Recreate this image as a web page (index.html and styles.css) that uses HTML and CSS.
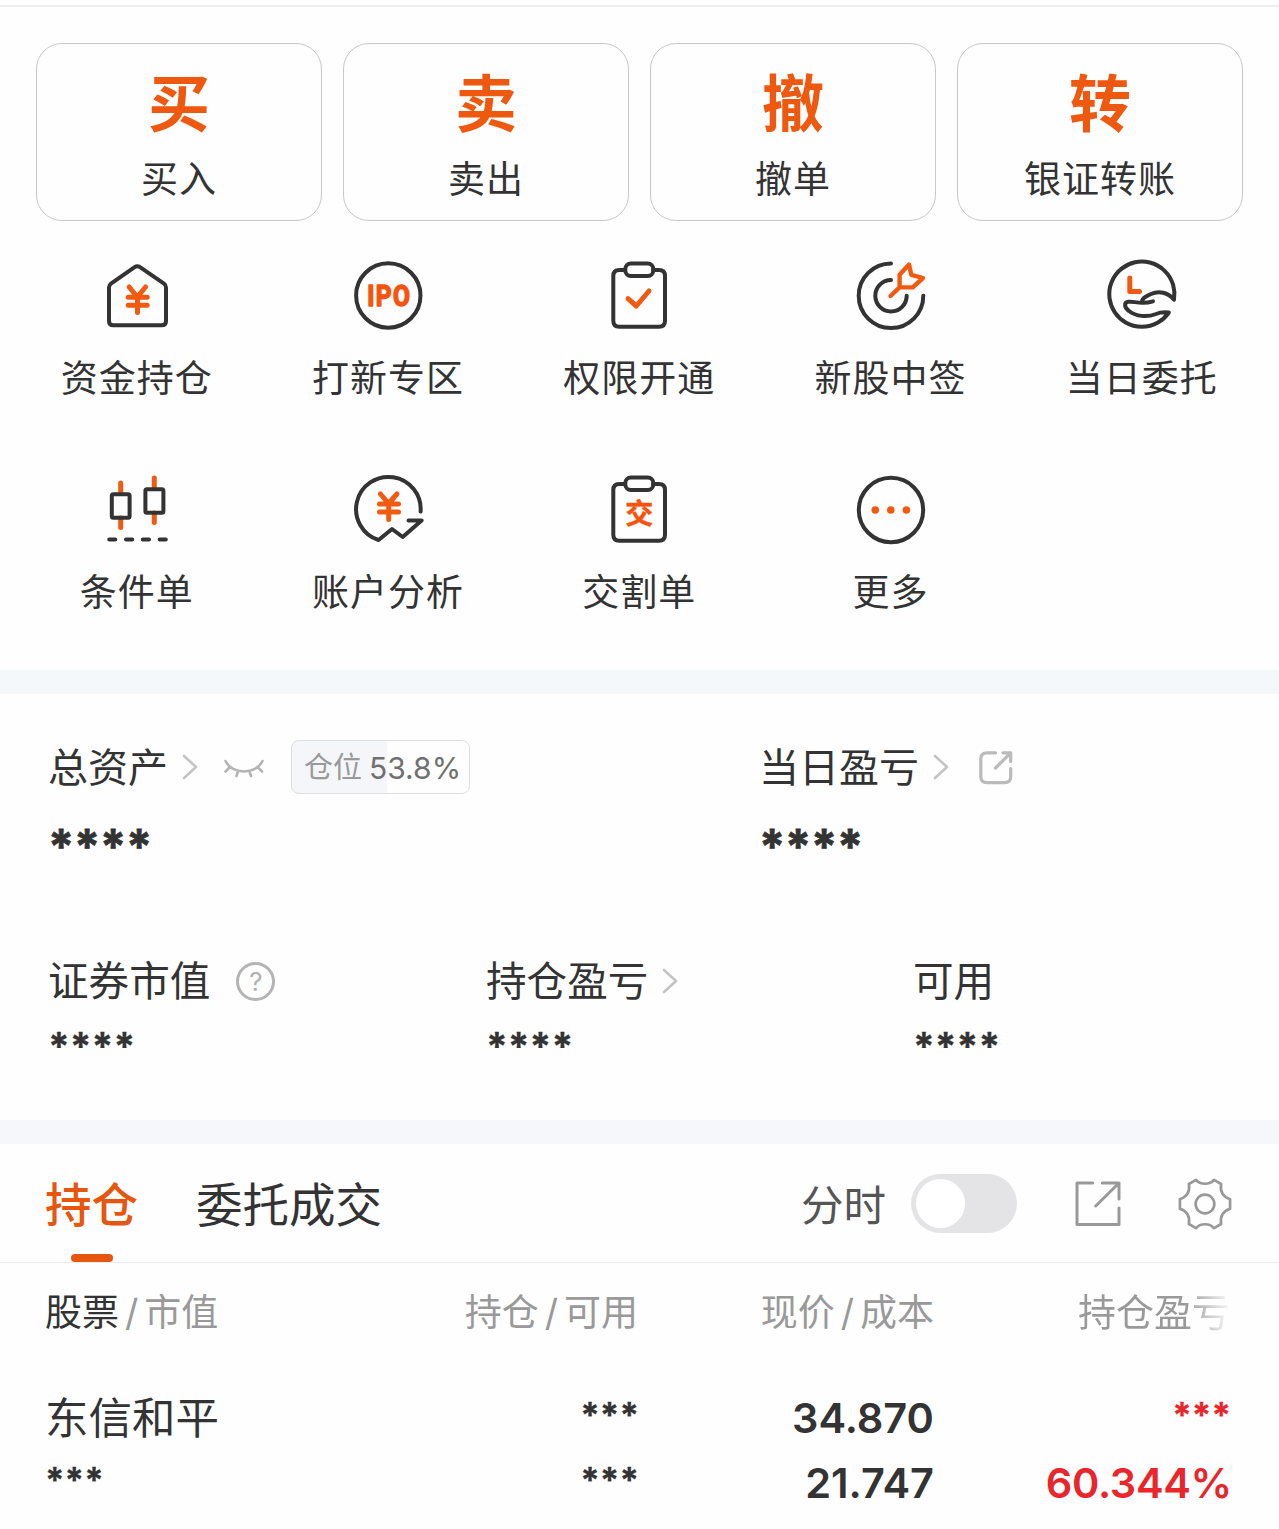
FILE: index.html
```html
<!DOCTYPE html>
<html lang="zh-CN">
<head>
  <meta charset="UTF-8" />
  <meta name="viewport" content="width=device-width, initial-scale=1.0"/>
  <title>交易</title>
  <link rel="stylesheet" href="styles.css">
</head>
<body>

  <!-- Main trade buttons -->
  <div class="trade-buttons">
    <a class="trade-card"><b>买</b><span>买入</span></a>
    <a class="trade-card"><b>卖</b><span>卖出</span></a>
    <a class="trade-card"><b>撤</b><span>撤单</span></a>
    <a class="trade-card"><b>转</b><span>银证转账</span></a>
  </div>

  <!-- Shortcuts -->
  <div class="menu">
    <a class="menu-item">
      <svg class="icon" viewBox="0 0 80 80">
        <path d="M12 32.5Q12 30 14 28.6L37.6 12.2Q40.3 10.2 43 12.2L67 28.6Q69 30 69 32.5V66Q69 70.3 64.7 70.3H16.3Q12 70.3 12 66Z"/>
        <path class="accent" d="M32.2 32L40.3 42L48.6 32M31.2 42.3H50.2M31.2 50.2H50.2M40.5 42V57.5"/>
      </svg>
      <span>资金持仓</span>
    </a>
    <a class="menu-item">
      <svg class="icon" viewBox="0 0 80 80">
        <circle cx="40.3" cy="40.5" r="32.2"/>
        <text class="icon-text ipo" transform="translate(41.3 51.2) scale(0.82 1)">IPO</text>
      </svg>
      <span>打新专区</span>
    </a>
    <a class="menu-item">
      <svg class="icon" viewBox="0 0 80 80">
        <path d="M26 15H20.3Q14.3 15 14.3 21V65.7Q14.3 71.7 20.3 71.7H60Q66 71.7 66 65.7V21Q66 15 60 15H54"/>
        <rect x="26.3" y="8.5" width="28" height="12.5" rx="5.5"/>
        <path class="accent" d="M29 43.7L37.3 51L50 36"/>
      </svg>
      <span>权限开通</span>
    </a>
    <a class="menu-item">
      <svg class="icon" viewBox="0 0 80 80">
        <path d="M40 8.4A32.3 32.3 0 1 0 72.3 40.7M40 25A15.7 15.7 0 1 0 55.7 40.7"/>
        <path class="accent thin" d="M39.5 41L48.6 32.4V19.7L58 9.5L60.3 19.8L72 23L61.7 32.4H48.6"/>
      </svg>
      <span>新股中签</span>
    </a>
    <a class="menu-item">
      <svg class="icon" viewBox="0 0 80 80">
        <path d="M40 46.3C40.5 42 45 41 49 39C57 35.2 66 37.5 72 44.6A32.6 32.6 0 1 0 66.8 57.5C61 57 58 57.2 54 59C45 62.5 34 61.5 27 56C22 52.5 22 47.5 26 46.8C30 46 34 47.8 40 47.8C44 48 47 47.5 51 46.3"/>
        <path class="accent" d="M27.8 23V36.6H37.5"/>
      </svg>
      <span>当日委托</span>
    </a>
    <a class="menu-item">
      <svg class="icon" viewBox="0 0 80 80">
        <path class="accent" d="M23.7 14V24M23.7 49V58.5M57.3 9V19M57.3 44V53.5"/>
        <rect x="14.8" y="25.3" width="17.8" height="23.4" rx="1.5"/>
        <rect x="48.4" y="20.3" width="18" height="23.4" rx="1.5"/>
        <path d="M12.2 70.6H18.3M29 70.6H35.2M45.8 70.6H52M62.6 70.6H68.8"/>
      </svg>
      <span>条件单</span>
    </a>
    <a class="menu-item">
      <svg class="icon" viewBox="0 0 80 80">
        <path d="M72.6 42.6A32.3 32.3 0 1 0 30.6 71L44 60L54.7 68L73.6 51.4H60.5"/>
        <path class="accent" d="M32.5 25L40.6 34.5L48.9 25M31.5 35H50.5M31.5 43H50.5M40.7 35V50.5"/>
      </svg>
      <span>账户分析</span>
    </a>
    <a class="menu-item">
      <svg class="icon" viewBox="0 0 80 80">
        <path d="M26 15H20.3Q14.3 15 14.3 21V65.7Q14.3 71.7 20.3 71.7H60Q66 71.7 66 65.7V21Q66 15 60 15H54"/>
        <rect x="26.3" y="8.5" width="28" height="12.5" rx="5.5"/>
        <text class="icon-text jiao" x="40.3" y="55">交</text>
      </svg>
      <span>交割单</span>
    </a>
    <a class="menu-item">
      <svg class="icon" viewBox="0 0 80 80">
        <circle cx="40" cy="41" r="32.2"/>
        <g class="dots">
          <circle cx="24.3" cy="41" r="3.8"/>
          <circle cx="39.8" cy="41" r="3.8"/>
          <circle cx="55.4" cy="41" r="3.8"/>
        </g>
      </svg>
      <span>更多</span>
    </a>
  </div>

  <div class="divider"></div>

  <!-- Account summary -->
  <div class="assets">
    <div class="asset-row top">
      <div class="asset">
        <div class="asset-label">
          <span>总资产</span>
          <svg class="chevron" viewBox="0 0 16 28"><path d="M2 3L14 14L2 25"/></svg>
          <svg class="eye" viewBox="0 0 40 20"><path d="M1.5 2C8 16 32 16 38.5 2M5 9L1.5 12.5M14 12.5L12.5 17M25.5 12.5L27 17M34 8.5L38 12.5"/></svg>
          <div class="position-badge"><span>仓位</span><em>53.8%</em></div>
        </div>
        <div class="stars big">****</div>
      </div>
      <div class="asset">
        <div class="asset-label">
          <span>当日盈亏</span>
          <svg class="chevron" viewBox="0 0 16 28"><path d="M2 3L14 14L2 25"/></svg>
          <svg class="share-small" viewBox="0 0 36 36"><path d="M17.5 2.8H9Q2.8 2.8 2.8 9V26.5Q2.8 32.7 9 32.7H26.5Q32.7 32.7 32.7 26.5V18.5M25 2.8H32.7V11.5M32.7 2.8L17.5 18"/></svg>
        </div>
        <div class="stars big">****</div>
      </div>
    </div>
    <div class="asset-row bottom">
      <div class="asset">
        <div class="asset-label">
          <span>证券市值</span>
          <i class="help">?</i>
        </div>
        <div class="stars">****</div>
      </div>
      <div class="asset">
        <div class="asset-label">
          <span>持仓盈亏</span>
          <svg class="chevron" viewBox="0 0 16 28"><path d="M2 3L14 14L2 25"/></svg>
        </div>
        <div class="stars">****</div>
      </div>
      <div class="asset">
        <div class="asset-label"><span>可用</span></div>
        <div class="stars">****</div>
      </div>
    </div>
  </div>

  <div class="divider blue"></div>

  <!-- Tabs -->
  <div class="tabs">
    <a class="tab active">持仓</a>
    <a class="tab">委托成交</a>
    <div class="tools">
      <span class="tool-label">分时</span>
      <div class="switch"></div>
      <svg class="share" viewBox="0 0 48 48"><path d="M18.7 3H3V44.5H45V28M28.3 3H45V19M45 3L21.7 26"/></svg>
      <svg class="gear" viewBox="0 0 56 56">
        <path d="M18.7 3C23 8.3 33 8.3 37.3 3L44.7 7.3C43.5 15 46.5 20.5 54 23V33C46.5 35.5 43.5 41 44.7 48.7L37.3 53C33 47.7 23 47.7 18.7 53L11.3 48.7C12.5 41 9.5 35.5 2 33V23C9.5 20.5 12.5 15 11.3 7.3Z"/>
        <circle cx="28" cy="28" r="9.7"/>
      </svg>
    </div>
  </div>

  <!-- Holdings -->
  <div class="holdings">
    <div class="row head">
      <div><strong>股票</strong><u>/</u>市值</div>
      <div>持仓<u>/</u>可用</div>
      <div>现价<u>/</u>成本</div>
      <div class="fade">持仓盈亏</div>
    </div>
    <div class="row">
      <div class="name">东信和平</div>
      <div class="stars small">***</div>
      <div class="num">34.870</div>
      <div class="stars small red">***</div>
    </div>
    <div class="row">
      <div class="stars small">***</div>
      <div class="stars small">***</div>
      <div class="num">21.747</div>
      <div class="num red">60.344%</div>
    </div>
  </div>

</body>
</html>
```

FILE: styles.css
```css
* {
  box-sizing: border-box;
}

body {
  font-family: Inter, 'Noto Sans CJK SC', sans-serif;
  margin: 0;
  padding: 5px 0 0;
  background: #fefefe;
  color: #333;
}

svg {
  display: block;
  flex-shrink: 0;
  fill: none;
  stroke-linecap: round;
  stroke-linejoin: round;
}

/* trade buttons */
.trade-buttons {
  display: flex;
  gap: 21px;
  padding: 36px 36px 0;
  border-top: 2px solid #eee;
}

.trade-card {
  flex: 1;
  height: 178px;
  padding-top: 14px;
  border: 1.5px solid #c8c8c8;
  border-radius: 26px;
  display: flex;
  flex-direction: column;
  align-items: center;
}

.trade-card b {
  font-family: 'Noto Sans CJK SC', sans-serif;
  font-size: 62px;
  font-weight: 700;
  line-height: 84px;
  color: #ee590f;
}

.trade-card span {
  font-size: 37px;
  letter-spacing: 1px;
  line-height: 54px;
  margin-top: 11px;
}

/* shortcuts */
.menu {
  display: grid;
  grid-template-columns: repeat(5, 1fr);
  row-gap: 64px;
  padding: 34px 11.5px 51px 11px;
}

.menu-item {
  display: flex;
  flex-direction: column;
  align-items: center;
}

.menu-item span {
  font-size: 37px;
  letter-spacing: 1px;
  line-height: 54px;
  margin: 17px 0 -1px;
}

.icon {
  width: 80px;
  height: 80px;
  stroke: #333;
  stroke-width: 4;
}

.icon .accent {
  stroke: #f25a10;
  stroke-width: 5;
}

.icon .thin {
  stroke-width: 4.4;
}

.icon .dots {
  fill: #f25a10;
  stroke: none;
}

.icon-text {
  fill: #f8530c;
  stroke: #f8530c;
  text-anchor: middle;
  font-weight: 700;
}

.ipo {
  font-family: Roboto, sans-serif;
  font-size: 30px;
  letter-spacing: 1.6px;
  stroke-width: 1.6;
}

.jiao {
  font-family: 'Noto Sans CJK SC', sans-serif;
  font-size: 28px;
  stroke-width: 0.5;
}

.divider {
  height: 24px;
  background: #f5f8fa;
}

.divider.blue {
  background: #f5f7fb;
}

/* assets */
.assets {
  height: 426px;
  padding: 46px 0 0 49px;
}

.asset-row {
  display: grid;
}

.asset-row.top {
  grid-template-columns: 711px 1fr;
}

.asset-row.bottom {
  grid-template-columns: 438px 427px 1fr;
  margin-top: 81px;
}

.asset-label {
  display: flex;
  align-items: center;
  height: 54px;
  font-size: 40px;
  line-height: 54px;
}

.asset-label > span {
  margin-left: -1px;
  padding-top: 2px;
}

.bottom .asset-label {
  font-size: 40.6px;
}

.chevron {
  width: 16px;
  height: 28px;
  margin-left: 14px;
  stroke: #c4c4c4;
  stroke-width: 2.6;
}

.eye {
  width: 40px;
  height: 20px;
  margin: 4px 0 0 26px;
  stroke: #b5b5b5;
  stroke-width: 2.6;
}

.share-small {
  width: 36px;
  height: 36px;
  margin: 1px 0 0 29px;
  stroke: #bbb;
  stroke-width: 3.2;
}

.position-badge {
  display: flex;
  align-items: center;
  width: 179px;
  height: 54px;
  margin-left: 27px;
  padding-left: 12px;
  border: 1.5px solid #dddfe2;
  border-radius: 8px;
  background: linear-gradient(to right, #f5f6fa 53.8%, #fefefe 53.8%);
  color: #999;
  font-size: 29px;
}

.position-badge span {
  padding-top: 2px;
}

.position-badge em {
  margin: 2px 0 0 7px;
  color: #707070;
  font-size: 30px;
  font-style: normal;
}

.help {
  width: 39px;
  height: 39px;
  margin-left: 26px;
  border: 3px solid #b4b4b4;
  border-radius: 50%;
  color: #b0b0b0;
  font-size: 26px;
  font-style: normal;
  line-height: 33px;
  text-align: center;
}

.stars {
  font-family: Inter, sans-serif;
  font-weight: 700;
  font-size: 39px;
  line-height: 44px;
  margin: 17px 0 0 -1px;
  -webkit-text-stroke: 0.3px currentColor;
}

.stars.big {
  font-size: 47px;
  line-height: 54px;
  margin-top: 25px;
  letter-spacing: -0.3px;
  -webkit-text-stroke-width: 0.8px;
}

/* tabs */
.tabs {
  display: flex;
  height: 119px;
  padding: 0 47px 0 45px;
  border-bottom: 1px solid #eee;
}

.tab {
  position: relative;
  margin-right: 58px;
  font-size: 46.5px;
  line-height: 122px;
}

.tab.active {
  color: #e6560f;
  font-weight: 500;
}

.tab.active::after {
  content: "";
  position: absolute;
  left: 26px;
  bottom: 0;
  width: 42px;
  height: 8px;
  border-radius: 4px;
  background: #e6560f;
}

.tools {
  display: flex;
  align-items: center;
  margin-left: auto;
}

.tool-label {
  margin-top: -2px;
  color: #555;
  font-size: 42.5px;
}

.switch {
  width: 106px;
  height: 59px;
  margin-left: 25px;
  padding: 5px;
  border-radius: 30px;
  background: #e4e4e6;
}

.switch::before {
  content: "";
  display: block;
  width: 49px;
  height: 49px;
  border-radius: 50%;
  background: #fff;
}

.share {
  width: 48px;
  height: 48px;
  margin: 2px 0 0 57px;
  stroke: #999;
  stroke-width: 3;
}

.gear {
  width: 54px;
  height: 54px;
  margin: 2px 0 0 56px;
  stroke: #999;
  stroke-width: 2.8;
}

/* holdings */
.row {
  display: grid;
  grid-template-columns: repeat(4, 296px);
  padding-left: 46px;
  height: 65px;
  line-height: 65px;
  text-align: right;
}

.row > :first-child {
  margin-left: -1px;
  text-align: left;
}

.row.head {
  height: 123px;
  line-height: 100px;
  color: #999;
  font-size: 37px;
}

.row strong {
  color: #333;
  font-weight: 400;
}

.row u {
  margin: 0 6px;
  text-decoration: none;
}

.row .fade {
  background: linear-gradient(to right, #999 85%, #fefefe 101%);
  -webkit-background-clip: text;
  background-clip: text;
  color: transparent;
  font-size: 38px;
  line-height: 98px;
}

.name {
  font-size: 43.5px;
}

.num {
  font-size: 41.5px;
  font-weight: 600;
}

.num.red {
  margin-right: -2px;
  letter-spacing: -0.3px;
}

.stars.small {
  margin-top: 0;
  margin-right: -1px;
  font-size: 35px;
  line-height: 58px;
}

.row .red {
  color: #e8262b;
}
```
